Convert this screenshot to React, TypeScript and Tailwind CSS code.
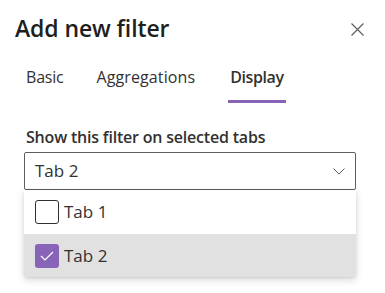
import React from "react";

export default function App() {
  return (
    <div
      className="w-[385px] h-[293px] bg-white relative overflow-hidden text-[#323130]"
      style={{ fontFamily: '"Open Sans", "Noto Sans", sans-serif' }}
    >
      <div className="flex items-start justify-between pl-[15px] pr-[21px] pt-[14px]">
        <h1 className="text-[23px] leading-[29px] font-semibold text-[#201f1e] tracking-[-0.1px]">Add new filter</h1>
        <svg width="13" height="13" viewBox="0 0 13 13" className="mt-[9px]">
          <path d="M0.5 0.5 L12.5 12.5 M12.5 0.5 L0.5 12.5" stroke="#605e5c" strokeWidth="1.2" fill="none" />
        </svg>
      </div>

      <div className="flex pl-[26px] mt-[22px] text-[16px] leading-[24px]">
        <div className="flex flex-col">
          <span className="tracking-[-0.2px]">Basic</span>
          <span className="mt-[11px] h-[3px]" />
        </div>
        <div className="flex flex-col ml-[33px]">
          <span className="tracking-[0.1px]">Aggregations</span>
          <span className="mt-[11px] h-[3px]" />
        </div>
        <div className="flex flex-col items-center ml-[33px]">
          <span className="font-semibold px-[2px] tracking-[-0.4px]">Display</span>
          <span className="mt-[11px] h-[3px] w-full bg-[#8764b8]" />
        </div>
      </div>

      <div className="pl-[26px] mt-[22px] text-[16px] leading-[24px] font-semibold tracking-[-0.2px]">
        Show this filter on selected tabs
      </div>

      <div className="ml-[24px] mt-[3px] w-[332px]">
        <div className="h-[38px] border border-[#605e5c] rounded-[2px] flex items-center justify-between pl-[10px] pr-[10px]">
          <span className="text-[17px] leading-[24px] text-[#323130]">Tab 2</span>
          <svg width="12" height="7" viewBox="0 0 12 7">
            <path d="M0.5 0.5 L6 6 L11.5 0.5" stroke="#605e5c" strokeWidth="1" fill="none" />
          </svg>
        </div>
        <div className="bg-white rounded-b-[2px] shadow-[0_3px_8px_rgba(0,0,0,0.14),0_1px_3px_rgba(0,0,0,0.1)] overflow-hidden">
          <div className="h-[44px] flex items-center pl-[11px]">
            <span className="w-[24px] h-[24px] rounded-[3px] border border-[#323130] bg-white" />
            <span className="ml-[5px] text-[17px] leading-[24px]">Tab 1</span>
          </div>
          <div className="h-[43px] flex items-center pl-[11px] bg-[#e1e1e1]">
            <span className="w-[24px] h-[24px] rounded-[3px] bg-[#8764b8] flex items-center justify-center">
              <svg width="14" height="10" viewBox="0 0 14 10">
                <path d="M1 5 L5 9 L13 1" stroke="white" strokeWidth="1.2" fill="none" />
              </svg>
            </span>
            <span className="ml-[5px] text-[17px] leading-[24px]">Tab 2</span>
          </div>
        </div>
      </div>
    </div>
  );
}
